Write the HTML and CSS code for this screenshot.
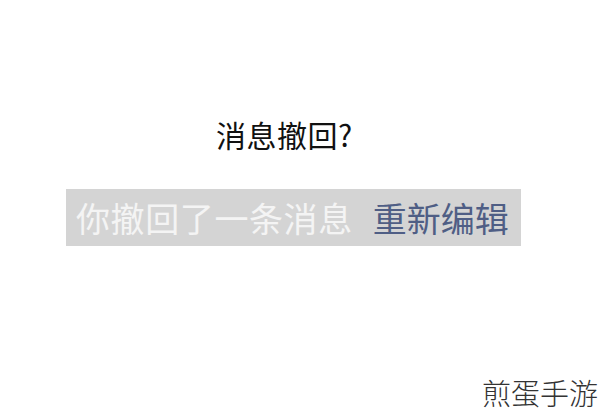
FILE: index.html
```html
<!DOCTYPE html>
<html lang="zh">
<head>
<meta charset="utf-8">
<link rel="stylesheet" href="styles.css">
</head>
<body>
<div class="page">
  <div class="title">消息撤回?</div>
  <div class="bar">
    <span class="msg">你撤回了一条消息</span>
    <span class="edit">重新编辑</span>
  </div>
  <div class="mark">煎蛋手游</div>
</div>
</body>
</html>
```
FILE: styles.css
```css
html, body {
  margin: 0;
  padding: 0;
  background: #ffffff;
}
.page {
  position: relative;
  width: 600px;
  height: 416px;
  overflow: hidden;
  display: flex;
  flex-direction: column;
  font-family: "Noto Sans CJK SC", "Noto Sans", sans-serif;
}
.title {
  margin-top: 114px;
  margin-left: 216px;
  font-size: 30px;
  line-height: 40px;
  color: #111111;
  letter-spacing: 0.5px;
}
.bar {
  margin-top: 35px;
  margin-left: 66px;
  width: 455px;
  height: 57px;
  background: #d4d4d4;
  display: flex;
  align-items: center;
  padding-left: 10px;
  box-sizing: border-box;
  gap: 20px;
  font-size: 34px;
  line-height: 40px;
}
.msg {
  color: #f4f4f4;
  letter-spacing: 0.6px;
}
.edit {
  color: #4f5e85;
}
.mark {
  position: absolute;
  right: 2px;
  bottom: 8px;
  font-size: 29px;
  line-height: 32px;
  font-weight: 200;
  color: #333;
}
```
